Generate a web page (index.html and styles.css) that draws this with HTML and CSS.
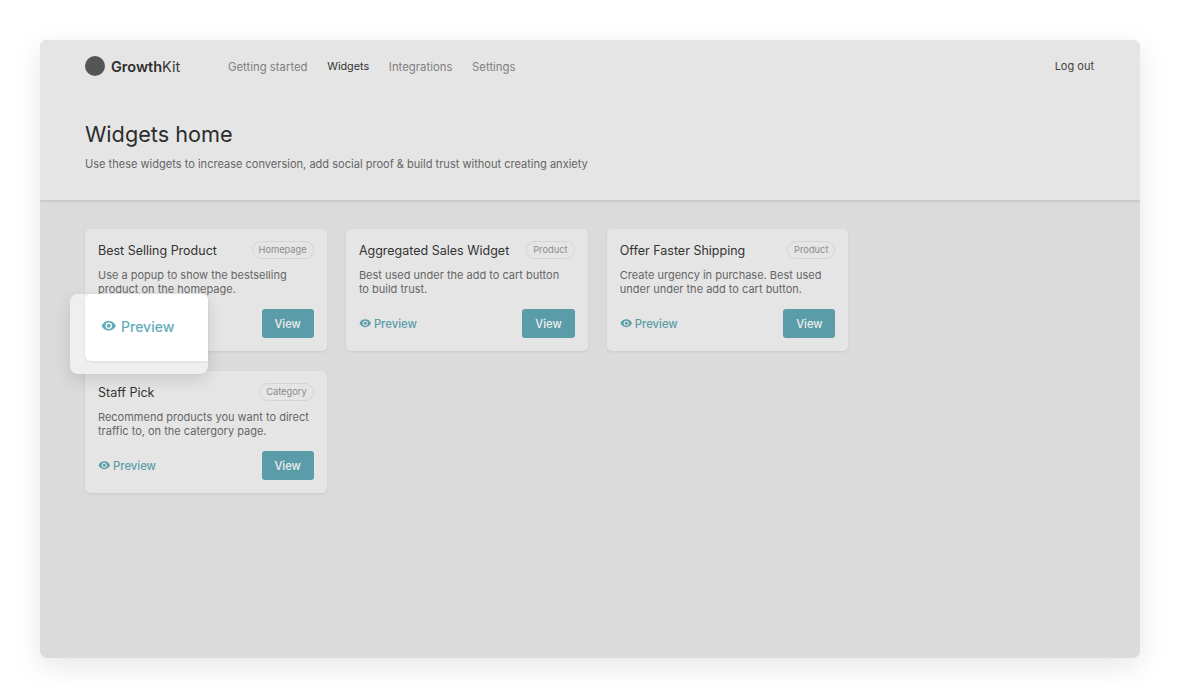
FILE: index.html
```html
<!DOCTYPE html>
<html lang="en">
<head>
<meta charset="utf-8">
<title>Widgets home</title>
<link rel="stylesheet" href="styles.css">
</head>
<body>
<div class="window">
  <header class="header">
    <nav class="nav">
      <div class="brand"><span class="logo"></span><span class="brand-name"><b>Growth</b>Kit</span></div>
      <div class="links">
        <a class="link">Getting started</a>
        <a class="link active">Widgets</a>
        <a class="link">Integrations</a>
        <a class="link">Settings</a>
      </div>
      <a class="logout">Log out</a>
    </nav>
    <h1 class="title">Widgets home</h1>
    <p class="subtitle">Use these widgets to increase conversion, add social proof &amp; build trust without creating anxiety</p>
  </header>
  <main class="grid">
    <article class="card">
      <div class="card-head"><h2 class="card-title">Best Selling Product</h2><span class="tag">Homepage</span></div>
      <p class="card-text">Use a popup to show the bestselling product on the homepage.</p>
      <div class="card-foot">
        <button class="btn">View</button>
      </div>
    </article>
    <article class="card">
      <div class="card-head"><h2 class="card-title">Aggregated Sales Widget</h2><span class="tag">Product</span></div>
      <p class="card-text">Best used under the add to cart button to build trust.</p>
      <div class="card-foot">
        <a class="preview"><svg class="eye" viewBox="0 0 24 24"><path d="M12 4.5C7 4.5 2.73 7.61 1 12c1.73 4.39 6 7.5 11 7.5s9.27-3.11 11-7.5c-1.73-4.39-6-7.5-11-7.5zM12 17a5 5 0 1 1 0-10 5 5 0 0 1 0 10zm0-8a3 3 0 1 0 0 6 3 3 0 0 0 0-6z"/></svg>Preview</a>
        <button class="btn">View</button>
      </div>
    </article>
    <article class="card">
      <div class="card-head"><h2 class="card-title">Offer Faster Shipping</h2><span class="tag">Product</span></div>
      <p class="card-text">Create urgency in purchase. Best used under under the add to cart button.</p>
      <div class="card-foot">
        <a class="preview"><svg class="eye" viewBox="0 0 24 24"><path d="M12 4.5C7 4.5 2.73 7.61 1 12c1.73 4.39 6 7.5 11 7.5s9.27-3.11 11-7.5c-1.73-4.39-6-7.5-11-7.5zM12 17a5 5 0 1 1 0-10 5 5 0 0 1 0 10zm0-8a3 3 0 1 0 0 6 3 3 0 0 0 0-6z"/></svg>Preview</a>
        <button class="btn">View</button>
      </div>
    </article>
    <article class="card">
      <div class="card-head"><h2 class="card-title">Staff Pick</h2><span class="tag">Category</span></div>
      <p class="card-text">Recommend products you want to direct traffic to, on the catergory page.</p>
      <div class="card-foot">
        <a class="preview"><svg class="eye" viewBox="0 0 24 24"><path d="M12 4.5C7 4.5 2.73 7.61 1 12c1.73 4.39 6 7.5 11 7.5s9.27-3.11 11-7.5c-1.73-4.39-6-7.5-11-7.5zM12 17a5 5 0 1 1 0-10 5 5 0 0 1 0 10zm0-8a3 3 0 1 0 0 6 3 3 0 0 0 0-6z"/></svg>Preview</a>
        <button class="btn">View</button>
      </div>
    </article>
  </main>
  <div class="spotlight">
    <div class="spotlight-inner">
      <a class="preview large"><svg class="eye" viewBox="0 0 24 24"><path d="M12 4.5C7 4.5 2.73 7.61 1 12c1.73 4.39 6 7.5 11 7.5s9.27-3.11 11-7.5c-1.73-4.39-6-7.5-11-7.5zM12 17a5 5 0 1 1 0-10 5 5 0 0 1 0 10zm0-8a3 3 0 1 0 0 6 3 3 0 0 0 0-6z"/></svg>Preview</a>
    </div>
  </div>
</div>
</body>
</html>
```
FILE: styles.css
```css
* { box-sizing: border-box; }
html, body { height: 100%; }
body {
  margin: 0;
  padding: 40px;
  height: 698px;
  overflow: hidden;
  background: #fff;
  font-family: Inter, "Liberation Sans", sans-serif;
  color: #333;
}
.window {
  position: relative;
  width: 1100px;
  height: 618px;
  background: #dbdbdb;
  border-radius: 7px;
  box-shadow: 0 8px 28px rgba(0, 0, 0, 0.1);
  overflow: hidden;
}
.header {
  height: 160px;
  padding: 16px 46px 0 45px;
  background: #e5e5e5;
  box-shadow: 0 1px 3px rgba(0, 0, 0, 0.14);
}
.nav { display: flex; align-items: center; height: 20px; }
.brand { display: flex; align-items: center; gap: 6px; width: 143px; }
.logo { width: 20px; height: 20px; border-radius: 50%; background: #555; }
.brand-name { font-size: 14.5px; color: #3a3a3a; }
.brand-name b { font-weight: 600; color: #2e2e2e; }
.links { display: flex; gap: 19.7px; padding-top: 1px; }
.link { font-size: 11.35px; color: #808080; }
.link.active { font-size: 10.8px; color: #333; }
.logout { margin-left: auto; font-size: 11px; color: #444; }
.title {
  margin: 44px 0 0;
  font-size: 21.7px;
  line-height: 28px;
  font-weight: 400;
  color: #2c2c2c;
}
.subtitle {
  margin: 9px 0 0;
  font-size: 11.05px;
  line-height: 14px;
  color: #666;
}
.grid {
  display: grid;
  grid-template-columns: repeat(3, 241.7px);
  column-gap: 19.2px;
  row-gap: 20px;
  padding: 29px 45px;
}
.card {
  height: 122px;
  padding: 12px 13px 13px;
  background: #e5e5e5;
  border-radius: 5px;
  box-shadow: 0 1px 3px rgba(0, 0, 0, 0.08);
  display: flex;
  flex-direction: column;
}
.card-head { display: flex; justify-content: space-between; align-items: center; height: 18px; }
.card-title { margin: 0; font-size: 12.5px; font-weight: 400; color: #333; }
.tag {
  padding: 0 6px;
  height: 18px;
  line-height: 15px;
  font-size: 9.3px;
  color: #8c8c8c;
  border: 1px solid #d4d4d4;
  border-radius: 9px;
}
.card-text {
  margin: 9px 0 0;
  padding-right: 4px;
  font-size: 11px;
  line-height: 14px;
  color: #666;
}
.card-foot { margin-top: auto; display: flex; align-items: center; }
.preview {
  display: flex;
  align-items: center;
  gap: 2.5px;
  font-size: 11.3px;
  font-weight: 500;
  color: #5a9ca8;
}
.eye { width: 12.5px; height: 12.5px; fill: currentColor; }
.btn {
  margin-left: auto;
  width: 52.2px;
  height: 29px;
  border: 0;
  padding: 0;
  border-radius: 3px;
  background: #5a9ca8;
  color: #eeeeee;
  font: 500 11.2px Inter, "Liberation Sans", sans-serif;
}
.spotlight {
  position: absolute;
  left: 30px;
  top: 254px;
  width: 138px;
  height: 80px;
  padding-left: 15px;
  background: #efefef;
  border-radius: 8px;
  box-shadow: 0 6px 16px rgba(0, 0, 0, 0.12);
}
.spotlight-inner {
  height: 67px;
  padding: 0 0 3px 16px;
  background: #fff;
  border-radius: 6px 6px 0 6px;
  box-shadow: 0 1px 3px rgba(0, 0, 0, 0.08);
  display: flex;
  align-items: center;
}
.preview.large { font-size: 14px; font-weight: 500; gap: 4.5px; color: #62acb9; }
.preview.large .eye { width: 15.5px; height: 15.5px; }
```
